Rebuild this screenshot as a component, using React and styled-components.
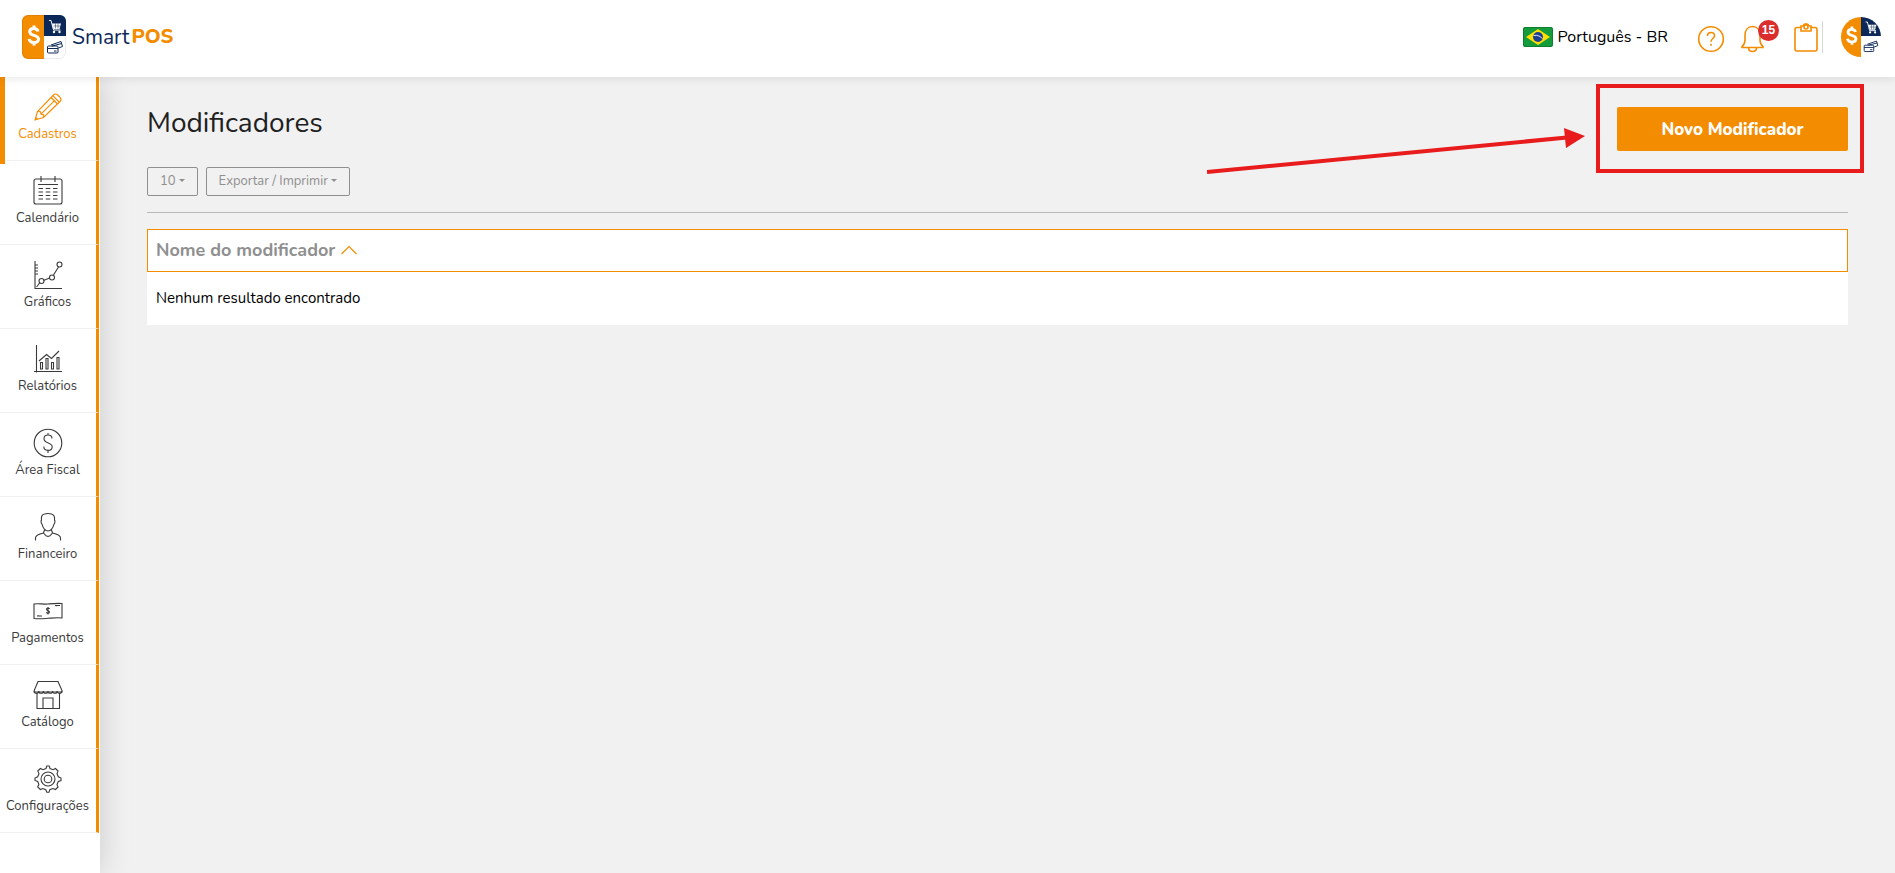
import React, { useState } from "react";
import styled, { createGlobalStyle, css } from "styled-components";

const ORANGE = "#f48c00";
const NAVY = "#0b2858";

const menu = [
  { label: "Cadastros", icon: "pencil" },
  { label: "Calendário", icon: "calendar" },
  { label: "Gráficos", icon: "graph" },
  { label: "Relatórios", icon: "report" },
  { label: "Área Fiscal", icon: "dollar" },
  { label: "Financeiro", icon: "person" },
  { label: "Pagamentos", icon: "cash" },
  { label: "Catálogo", icon: "store" },
  { label: "Configurações", icon: "gear" },
];

const icons = {
  pencil: (
    <>
      <path d="M2 28 4.500 19.500 20.500 3a3 3 0 0 1 4.200 0L27 5.300a3 3 0 0 1 0 4.200L10.500 25.500z" />
      <path d="M4.500 19.500 7.500 19.800 8 22.200 10.300 22.500 10.500 25.500M8 22.200 22 8.200M18 5.500l6.500 6.500M20 3.800l6.200 6.200M2.800 25.500 4.500 27.200" />
    </>
  ),
  calendar: (
    <>
      <rect x="1" y="3" width="28" height="25" rx="2" />
      <path d="M8 0v6M22 0v6M5 8.500h20" />
      <path d="M5.500 12.500h19M5.500 16h19M5.500 19.500h19M5.500 23h19" strokeDasharray="4.500 2.750" />
    </>
  ),
  graph: (
    <>
      <path d="M2 1v27.500h27M2 5h3M2 8h3M2 11h3M2 14h3M3.500 27 7 22.500M10.500 20.500l6-2.500M20.500 15 25.500 7" />
      <circle cx="8.500" cy="21" r="2.500" />
      <circle cx="19" cy="17.500" r="2.500" />
      <circle cx="26.500" cy="4.500" r="2.500" />
    </>
  ),
  report: (
    <>
      <path d="M3.500 1v27.500M1 27.500h28M6 17l7.500-6.500 5 4 7.500-7.500" />
      <path d="M7.500 18.500h2v6.500h-2zM13 14.500h2v10.500h-2zM18.500 18.500h2v6.500h-2zM24 13.500h2v11.500h-2z" />
    </>
  ),
  dollar: (
    <>
      <circle cx="15" cy="15" r="13.800" />
      <path d="M19 10.500c0-2.500-2-3.500-4-3.500s-4 1.200-4 3.700c0 5 8.200 3.500 8.200 8 0 2.500-2 3.700-4.200 3.700s-4.200-1.200-4.200-3.800M15 5v2M15 22.500v2.500" />
    </>
  ),
  person: (
    <>
      <path d="M8.500 8C8 4.500 9 2.500 11.500 2c2.500-.8 4.500-.8 7 0s3.500 2.500 3 6c.8.800.5 3.200-.5 4.200-.8 3-3 6.800-6 6.800s-5.200-3.800-6-6.800c-1-1-1.300-3.400-.5-4.200z" />
      <path d="M2.500 28.500v-2.500c0-3 3.500-4 8-5l1-3M27.500 28.500v-2.500c0-3-3.500-4-8-5l-1-3M10.500 21l2.500 2.800 2 .7 2-.7 2.500-2.800" />
    </>
  ),
  cash: (
    <>
      <path d="M1 8c5-1 9 .5 14 0s9-1 14-.500V22c-5-.5-9 0-14 .3s-9 .7-14 .2zM4 20c2-.5 3 .3 5 0M22 9.500c2 .5 3-.3 5 0" />
      <path d="M16.500 13c0-1-3-1.500-3 .3s3 1.200 3 2.800-3 1.500-3 .2M15 11v7.500" />
    </>
  ),
  store: (
    <>
      <path d="M5 1.500h20l4 9v1.500H1.200v-1.500zM4 13v15.500h22.500V13M10 28.500V18h10v10.500" />
      <path d="M1.200 11a2.300 2.300 0 0 0 4.600 0 2.300 2.300 0 0 0 4.600 0 2.300 2.300 0 0 0 4.600 0 2.300 2.300 0 0 0 4.600 0 2.300 2.300 0 0 0 4.600 0 2.300 2.300 0 0 0 4.600 0" />
    </>
  ),
  gear: (
    <>
      <path d="M13 4.500 13.800 2h2.400l.8 2.500 3 1.200L22.500 4.500 25 7l-1 2.700 1.300 3.100L28 14v2.500l-2.700 1L24 20.500l1 2.500-2.500 2.500-2.700-1-3 1.200-.8 2.600h-2.200l-1-2.600-3-1.200-2.500 1L4.700 23l1.200-2.500-1.200-3L2 16.400V14l2.700-1.200L6 9.700 4.800 7l2.600-2.500L10 5.700z" />
      <circle cx="15" cy="15" r="7" />
      <circle cx="15" cy="15" r="3.800" />
    </>
  ),
};

const BrandMark = ({ size, round, label }) => (
  <svg width={size} height={size} viewBox="0 0 44 44" role="img" aria-label={label}>
    <clipPath id={`mark-${label}`}>
      <rect width="44" height="44" rx={round ? 22 : 6} />
    </clipPath>
    <g clipPath={`url(#mark-${label})`}>
      <path fill="#fff" d="M0 0h44v44H0z" />
      <path fill={ORANGE} d="M0 0h22v44H0z" />
      <path fill={NAVY} d="M22 0h22v21H22z" />
      <path
        d="M16 16.500c-.5-2-2-3-4.300-3-2.500 0-4 1.200-4 3.300 0 4.700 8.800 2.500 8.800 7.200 0 2.300-1.800 3.500-4.600 3.500S7.500 26.200 7 24M12 10.500V14M12 27v3.500"
        fill="none"
        stroke="#fff"
        strokeWidth="3"
      />
      <path d="M30 8.500h9l-1.500 5.500h-6z" fill="#fff" />
      <path d="M27 5.500h2l2.500 9.500h7" fill="none" stroke="#fff" />
      <path d="M31.500 11h7M33.500 8.500v5M36 8.500v5" fill="none" stroke={NAVY} strokeWidth=".5" />
      <circle cx="32" cy="17" r="1.200" fill="#fff" />
      <circle cx="37.500" cy="17" r="1.200" fill="#fff" />
      <g fill="none" stroke={NAVY}>
        <path d="m29 30 10-3.500 1.500 5-4 1.500M30 31l10-2.500" />
        <rect x="25.500" y="31" width="10.500" height="7" rx="1" />
        <path d="M25.500 33.500H36M32 36h2.500" />
      </g>
    </g>
    {!round && <rect x=".5" y=".5" width="43" height="43" rx="6" fill="none" stroke="#000" strokeOpacity=".08" />}
  </svg>
);

const Flag = () => (
  <svg width="30" height="20" viewBox="0 0 30 20" aria-hidden="true">
    <rect width="30" height="20" rx="2" fill="#149b3b" />
    <path d="M15 2 27 10 15 18 3 10z" fill="#fedf00" />
    <circle cx="15" cy="10" r="5" fill="#1c3f94" />
    <path d="M10.500 8.500c4-.8 7 .7 9 3.300" stroke="#dfe8f5" fill="none" />
    <rect x=".5" y=".5" width="29" height="19" rx="2" fill="none" stroke="#0b6a29" strokeOpacity=".6" />
  </svg>
);

const App = () => {
  let [active, setActive] = useState("Cadastros");
  let [ascending, setAscending] = useState(true);

  return (
    <>
      <GlobalStyle />
      <Page>
        <Header>
          <Brand href="#">
            <BrandMark size={44} label="logo" />
            <BrandName>
              Smart<b>POS</b>
            </BrandName>
          </Brand>
          <Tools>
            <Language type="button">
              <Flag />
              Português - BR
            </Language>
            <IconButton type="button" aria-label="Ajuda">
              <svg width="28" height="28" viewBox="0 0 28 28">
                <circle cx="14" cy="14" r="12.300" />
                <path d="M10.500 11c0-2.300 1.500-3.500 3.500-3.500s3.500 1.300 3.500 3.200c0 2.700-3.500 3-3.500 6M14 18.800v2" />
              </svg>
            </IconButton>
            <IconButton type="button" aria-label="Notificações">
              <svg width="24" height="28" viewBox="0 0 24 28">
                <path d="M1 22.500v-1c2.500-2 3-3.500 3-6.500v-4.500C4 5 7 1.500 11.500 1.500s7.500 3.500 7.500 9V15c0 3 .5 4.500 3 6.500v1zM7.500 22.500c0 2.500 1.800 4 4 4s4-1.500 4-4" />
              </svg>
              <Badge>15</Badge>
            </IconButton>
            <IconButton type="button" aria-label="Tarefas" $divided>
              <svg width="24" height="32" viewBox="0 0 24 32">
                <path d="M7 6.500H3a2 2 0 0 0-2 2V28a2 2 0 0 0 2 2h18a2 2 0 0 0 2-2V8.500a2 2 0 0 0-2-2h-4M7 5h1.800a3.500 3.500 0 0 1 6.400 0H17v5H7z" />
                <circle cx="12" cy="6" r="2" />
              </svg>
            </IconButton>
            <Account type="button" aria-label="Conta">
              <BrandMark size={40} round label="avatar" />
            </Account>
          </Tools>
        </Header>

        <Body>
          <Sidebar>
            {menu.map((item) => (
              <MenuItem
                href="#"
                key={item.label}
                $active={item.label === active}
                onClick={() => setActive(item.label)}
              >
                <svg width="30" height="30" viewBox="0 0 30 30" aria-hidden="true">
                  {icons[item.icon]}
                </svg>
                {item.label}
              </MenuItem>
            ))}
          </Sidebar>

          <Main>
            <TitleRow>
              <h1>Modificadores</h1>
              <Callout>
                <Arrow width="380" height="54" viewBox="0 0 380 54" aria-hidden="true">
                  <path d="M0 46 360 11.500" stroke="#e81c1c" strokeWidth="4" />
                  <path d="M357 2 378 10 359 22z" fill="#e81c1c" />
                </Arrow>
                <Primary type="button">Novo Modificador</Primary>
              </Callout>
            </TitleRow>

            <Filters>
              <Dropdown type="button">10</Dropdown>
              <Dropdown type="button">Exportar / Imprimir</Dropdown>
            </Filters>

            <Table>
              <thead>
                <tr>
                  <th>
                    <button type="button" onClick={() => setAscending(!ascending)}>
                      Nome do modificador
                      <svg width="16" height="10" viewBox="0 0 16 10" aria-hidden="true">
                        <path d={ascending ? "M.5 9 8 1.500 15.500 9" : "M.5 1.500 8 9 15.500 1.500"} />
                      </svg>
                    </button>
                  </th>
                </tr>
              </thead>
              <tbody>
                <tr>
                  <td>Nenhum resultado encontrado</td>
                </tr>
              </tbody>
            </Table>
          </Main>
        </Body>
      </Page>
    </>
  );
};

export default App;

const GlobalStyle = createGlobalStyle`
  * {
    box-sizing: border-box;
  }

  body {
    margin: 0;
    background: #f1f1f1;
    font-family: Nunito, Lato, "Noto Sans", sans-serif;
    color: #212121;
  }

  button {
    font-family: inherit;
    cursor: pointer;
  }

  a {
    text-decoration: none;
  }
`;

const Page = styled.div`
  display: flex;
  flex-direction: column;
  min-height: 100vh;
`;

const Header = styled.header`
  position: relative;
  z-index: 2;
  display: flex;
  align-items: center;
  justify-content: space-between;
  height: 77px;
  padding: 0 14px 4px 22px;
  background: white;
  box-shadow: 0 1px 10px rgba(0, 0, 0, 0.1);
`;

const Brand = styled.a`
  display: flex;
  align-items: center;
  gap: 6px;
  color: ${NAVY};
`;

const BrandName = styled.span`
  display: flex;
  gap: 2px;
  font-size: 21px;
  line-height: 24px;

  b {
    color: ${ORANGE};
    font-weight: 800;
    font-size: 20px;
  }
`;

const Tools = styled.div`
  display: flex;
  align-items: center;
`;

const Language = styled.button`
  display: flex;
  align-items: center;
  gap: 4px;
  margin-right: 29px;
  padding: 0;
  border: 0;
  background: none;
  font-size: 16px;
  color: black;
`;

const IconButton = styled.button`
  position: relative;
  display: flex;
  margin-right: 16px;
  padding: 4px 0 0;
  border: 0;
  background: none;

  svg {
    fill: none;
    stroke: ${ORANGE};
    stroke-width: 1.6;
  }

  ${({ $divided }) =>
    $divided &&
    css`
      margin: 0 18px 0 13px;
      padding: 0 4px 0 0;
      border-right: 1px solid #d7d7d7;
    `}
`;

const Badge = styled.span`
  position: absolute;
  top: -1px;
  left: 17px;
  width: 21px;
  height: 21px;
  border-radius: 50%;
  background: #dc2d2d;
  color: white;
  font: bold 12px/21px "Liberation Sans", sans-serif;
  text-align: center;
`;

const Account = styled.button`
  display: flex;
  padding: 0;
  border: 0;
  background: none;
`;

const Body = styled.div`
  display: flex;
  flex: 1;
`;

const Sidebar = styled.nav`
  position: relative;
  z-index: 1;
  flex: none;
  width: 100px;
  background: white;
  box-shadow: 0 0 30px rgba(0, 0, 0, 0.16);
`;

const MenuItem = styled.a`
  position: relative;
  display: flex;
  flex-direction: column;
  align-items: center;
  gap: 3px;
  width: 99px;
  height: 84px;
  padding: 15px 1px 0 0;
  border-right: 3px solid ${ORANGE};
  border-bottom: 1px solid #f0f0f0;
  color: ${({ $active }) => ($active ? ORANGE : "#3a3a3a")};
  font-size: 13px;
  line-height: 18px;
  white-space: nowrap;

  svg {
    fill: none;
    stroke: currentColor;
    stroke-width: 1.1;
  }

  ${({ $active }) =>
    $active &&
    css`
      &::before {
        content: "";
        position: absolute;
        top: 0;
        left: 0;
        width: 5px;
        height: 87px;
        z-index: 1;
        background: ${ORANGE};
      }
    `}
`;

const Main = styled.main`
  flex: 1;
  padding: 30px 47px;
`;

const TitleRow = styled.div`
  display: flex;
  align-items: flex-start;
  justify-content: space-between;

  h1 {
    margin: 0;
    font-size: 28px;
    font-weight: 400;
    line-height: 32px;
  }
`;

/* red frame and arrow drawn around the button */
const Callout = styled.div`
  position: relative;

  &::after {
    content: "";
    position: absolute;
    inset: -23px -16px -22px -21px;
    border: 4px solid #e81c1c;
    pointer-events: none;
  }
`;

const Arrow = styled.svg`
  position: absolute;
  right: 261px;
  top: 19px;
`;

const Primary = styled.button`
  width: 231px;
  height: 44px;
  border: 0;
  border-radius: 2px;
  background: ${ORANGE};
  color: white;
  font-size: 17px;
  font-weight: 800;
  font-variant-ligatures: none;
`;

const Filters = styled.div`
  display: flex;
  gap: 8px;
  padding: 16px 0;
  margin-bottom: 16px;
  border-bottom: 1px solid #b8b8b8;
`;

const Dropdown = styled.button`
  display: flex;
  align-items: center;
  gap: 3px;
  height: 29px;
  padding: 0 12px 2px;
  border: 1px solid #8f8f8f;
  border-radius: 2px;
  background: none;
  color: #8f8f8f;
  font-size: 13px;

  &::after {
    content: "";
    border: 3px solid transparent;
    border-top-color: currentColor;
    border-bottom: 0;
  }
`;

const Table = styled.table`
  width: 100%;
  border-collapse: separate;
  border-spacing: 0;
  background: white;

  th {
    height: 43px;
    padding: 0 8px 2px;
    border: 1px solid ${ORANGE};
    text-align: left;
  }

  th button {
    display: flex;
    align-items: center;
    gap: 6px;
    padding: 0;
    border: 0;
    background: none;
    color: #8f8f8f;
    font-size: 18px;
    font-weight: 700;
  }

  th svg {
    fill: none;
    stroke: ${ORANGE};
    stroke-width: 1.2;
  }

  td {
    height: 53px;
    padding: 0 9px 2px;
    color: black;
    font-size: 15px;
  }
`;
